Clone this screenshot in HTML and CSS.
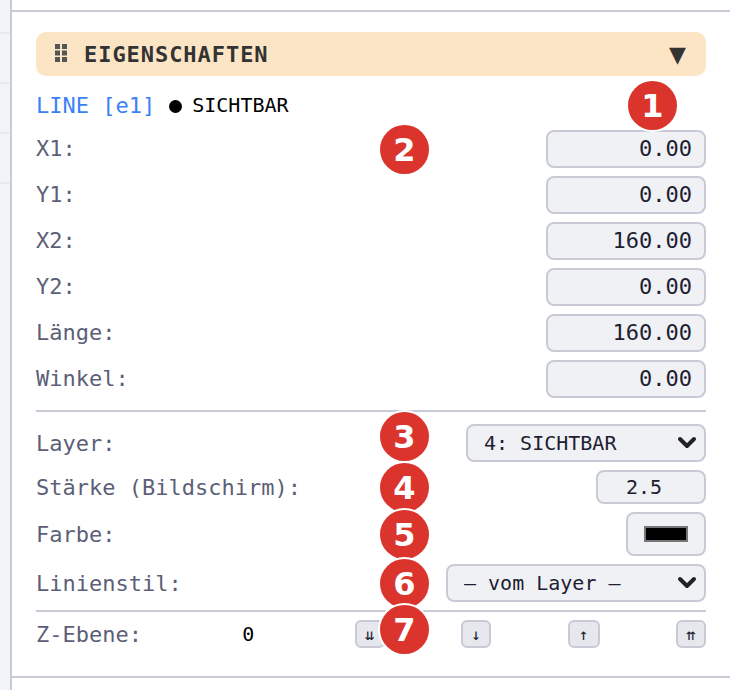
FILE: index.html
```html
<!DOCTYPE html>
<html lang="de">
<head>
  <meta charset="UTF-8" />
  <title>Eigenschaften</title>
  <link rel="stylesheet" href="styles.css">
</head>
<body>
  <div class="layout">
    <aside class="strip">
      <div class="strip-item"></div>
      <div class="strip-item"></div>
      <div class="strip-item"></div>
      <div class="strip-item"></div>
    </aside>

    <section class="panel">
      <header class="panel-head">
        <svg class="grip" width="12" height="18" viewBox="0 0 12 18">
          <rect x="0" y="0" width="5" height="5" />
          <rect x="7" y="0" width="5" height="5" />
          <rect x="0" y="6.5" width="5" height="5" />
          <rect x="7" y="6.5" width="5" height="5" />
          <rect x="0" y="13" width="5" height="5" />
          <rect x="7" y="13" width="5" height="5" />
        </svg>
        <h2>EIGENSCHAFTEN</h2>
        <span class="toggle">▼</span>
      </header>

      <div class="entity">
        <span class="entity-id">LINE [e1]</span>
        <span class="dot"></span>
        <span class="entity-layer">SICHTBAR</span>
      </div>

      <div class="row row-geo"><label>X1:</label><input class="num" value="0.00" readonly /></div>
      <div class="row row-geo"><label>Y1:</label><input class="num" value="0.00" readonly /></div>
      <div class="row row-geo"><label>X2:</label><input class="num" value="160.00" readonly /></div>
      <div class="row row-geo"><label>Y2:</label><input class="num" value="0.00" readonly /></div>
      <div class="row row-geo"><label>Länge:</label><input class="num" value="160.00" readonly /></div>
      <div class="row row-geo"><label>Winkel:</label><input class="num" value="0.00" readonly /></div>

      <hr class="sep sep-first" />

      <div class="row">
        <label>Layer:</label>
        <select class="sel sel-layer"><option>4: SICHTBAR</option></select>
      </div>
      <div class="row row-width">
        <label>Stärke (Bildschirm):</label>
        <input class="num-small" value="2.5" readonly />
      </div>
      <div class="row row-color">
        <label>Farbe:</label>
        <button class="color-btn" type="button"><span class="swatch"></span></button>
      </div>
      <div class="row">
        <label>Linienstil:</label>
        <select class="sel sel-style"><option>— vom Layer —</option></select>
      </div>

      <hr class="sep sep-second" />

      <div class="z-row">
        <label>Z-Ebene:</label>
        <span class="z-value">0</span>
        <button class="z-btn" type="button">⇊</button>
        <button class="z-btn" type="button">↓</button>
        <button class="z-btn z-btn-wide" type="button">↑</button>
        <button class="z-btn" type="button">⇈</button>
      </div>

      <span class="badge b1">1</span>
      <span class="badge b2">2</span>
      <span class="badge b3">3</span>
      <span class="badge b4">4</span>
      <span class="badge b5">5</span>
      <span class="badge b6">6</span>
      <span class="badge b7">7</span>
    </section>
  </div>
</body>
</html>
```

FILE: styles.css
```css
* {
  box-sizing: border-box;
}

html, body {
  margin: 0;
  padding: 0;
  width: 730px;
  height: 690px;
  overflow: hidden;
  background-color: white;
}

body {
  font-family: "DejaVu Sans Mono", monospace;
  font-size: 22px;
  color: #5c5f77;
}

.layout {
  display: flex;
  height: 690px;
}

.strip {
  width: 12px;
  flex: none;
  background-color: #f0f4f8;
  border-right: 2px solid #c9cad5;
  padding-top: 32px;
}

.strip-item {
  height: 50px;
  border-top: 2px solid #e8eaef;
}

.panel {
  position: relative;
  flex: 1;
  margin-top: 10px;
  height: 668px;
  padding: 20px 24px 0;
  border-top: 2px solid #c9cad5;
  border-bottom: 2px solid #c9cad5;
}

.panel-head {
  display: flex;
  align-items: center;
  height: 44px;
  padding: 0 20px 0 19px;
  background-color: #fce5c5;
  border-radius: 10px;
  color: #333;
}

.panel-head h2 {
  flex: 1;
  margin: 0;
  font-size: 22px;
  font-weight: bold;
  letter-spacing: 0.95px;
}

.grip {
  flex: none;
  margin: -2px 17px 0 0;
  fill: #555;
}

.toggle {
  font-family: "DejaVu Sans", sans-serif;
  font-size: 22px;
}

.entity {
  display: flex;
  align-items: center;
  height: 54px;
  padding-top: 4px;
  color: black;
}

.entity-id {
  color: #3b82f6;
}

.dot {
  width: 13px;
  height: 13px;
  margin: 2px 10px 0 14px;
  border-radius: 50%;
  background-color: black;
}

.entity-layer {
  font-size: 20px;
}

.row {
  display: flex;
  justify-content: space-between;
  align-items: center;
  height: 38px;
  margin-bottom: 8px;
}

.row label, .z-row label {
  color: #5c5f77;
}

.row-geo label {
  margin-top: -2px;
}

.num, .num-small, .sel, .color-btn {
  font-family: "DejaVu Sans Mono", monospace;
  color: #1e2030;
  background-color: #eff1f5;
  border: 2px solid #c9cad5;
  border-radius: 8px;
}

.num {
  width: 160px;
  height: 38px;
  padding: 0 12px 2px;
  font-size: 22px;
  text-align: right;
}

.sep {
  height: 2px;
  margin: 0;
  border: none;
  background-color: #c9cad5;
}

.sep-first {
  margin-top: 12px;
  margin-bottom: 12px;
}

.sep-second {
  margin-top: 8px;
  margin-bottom: 8px;
}

.sel {
  height: 38px;
  padding: 0 16px;
  font-size: 20px;
  appearance: none;
  background-image: url("data:image/svg+xml,%3Csvg xmlns='http://www.w3.org/2000/svg' viewBox='0 0 20 14'%3E%3Cpath d='M3 3l7 7 7-7' fill='none' stroke='%23222' stroke-width='4' stroke-linecap='round' stroke-linejoin='round'/%3E%3C/svg%3E");
  background-repeat: no-repeat;
  background-position: right 7px center;
  background-size: 20px 14px;
}

.sel-layer {
  width: 240px;
}

.sel-style {
  width: 260px;
}

.row-width {
  height: 34px;
}

.num-small {
  width: 110px;
  height: 34px;
  padding: 0 28px 0 14px;
  font-size: 20px;
  text-align: center;
}

.row-color {
  height: 44px;
}

.color-btn {
  display: flex;
  align-items: center;
  justify-content: center;
  width: 80px;
  height: 44px;
  padding: 0;
}

.swatch {
  display: block;
  width: 44px;
  height: 16px;
  background-color: black;
  border: 2px solid #777;
}

.z-row {
  display: flex;
  justify-content: space-between;
  align-items: center;
  height: 28px;
}

.z-value {
  width: 60px;
  font-size: 20px;
  color: black;
  text-align: center;
}

.z-btn {
  width: 30px;
  height: 28px;
  padding: 0;
  font-family: "DejaVu Sans Mono", monospace;
  font-size: 16px;
  color: #1e2030;
  background-color: #e6e8ee;
  border: 2px solid #c9cad5;
  border-radius: 6px;
}

.z-btn-wide {
  width: 32px;
}

.badge {
  position: absolute;
  display: flex;
  align-items: center;
  justify-content: center;
  width: 49px;
  height: 49px;
  border-radius: 50%;
  font-family: "DejaVu Sans", sans-serif;
  font-size: 32px;
  font-weight: bold;
  color: white;
  background-color: #da342c;
  box-shadow: 0 0 0 2px white;
}

/* offsets measured from the panel's top-left */
.b1 { left: 616px; top: 69px; }
.b2 { left: 368px; top: 113px; }
.b3 { left: 368px; top: 400px; }
.b4 { left: 368px; top: 451px; }
.b5 { left: 368px; top: 498px; }
.b6 { left: 368px; top: 547px; }
.b7 { left: 368px; top: 593px; }
```
